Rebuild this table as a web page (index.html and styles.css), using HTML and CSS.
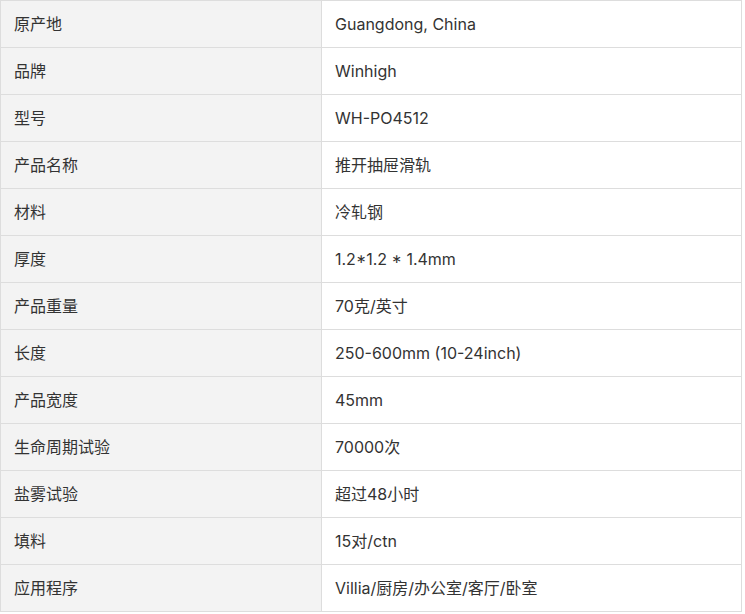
FILE: index.html
```html
<!DOCTYPE html>
<html lang="zh">
<head>
<meta charset="utf-8">
<link rel="stylesheet" href="styles.css">
</head>
<body>
<table class="spec">
<tbody>
<tr><td class="k">原产地</td><td class="v">Guangdong, China</td></tr>
<tr><td class="k">品牌</td><td class="v">Winhigh</td></tr>
<tr><td class="k">型号</td><td class="v">WH-PO4512</td></tr>
<tr><td class="k">产品名称</td><td class="v">推开抽屉滑轨</td></tr>
<tr><td class="k">材料</td><td class="v">冷轧钢</td></tr>
<tr><td class="k">厚度</td><td class="v">1.2*1.2 * 1.4mm</td></tr>
<tr><td class="k">产品重量</td><td class="v">70克/英寸</td></tr>
<tr><td class="k">长度</td><td class="v">250-600mm (10-24inch)</td></tr>
<tr><td class="k">产品宽度</td><td class="v">45mm</td></tr>
<tr><td class="k">生命周期试验</td><td class="v">70000次</td></tr>
<tr><td class="k">盐雾试验</td><td class="v">超过48小时</td></tr>
<tr><td class="k">填料</td><td class="v">15对/ctn</td></tr>
<tr><td class="k">应用程序</td><td class="v">Villia/厨房/办公室/客厅/卧室</td></tr>
</tbody>
</table>
</body>
</html>
```
FILE: styles.css
```css
html, body {
  margin: 0;
  padding: 0;
  background: #fff;
}
.spec {
  border-collapse: collapse;
  width: 742px;
  font-family: Inter, "Noto Sans CJK SC", sans-serif;
  font-size: 16px;
  line-height: 20px;
  color: #333;
}
.spec td {
  border: 1px solid #ddd;
  height: 47px;
  padding: 0 13px;
  box-sizing: border-box;
  vertical-align: middle;
}
.spec .k {
  width: 321px;
  background: #f3f3f3;
}
.spec .v {
  background: #fff;
}
```
